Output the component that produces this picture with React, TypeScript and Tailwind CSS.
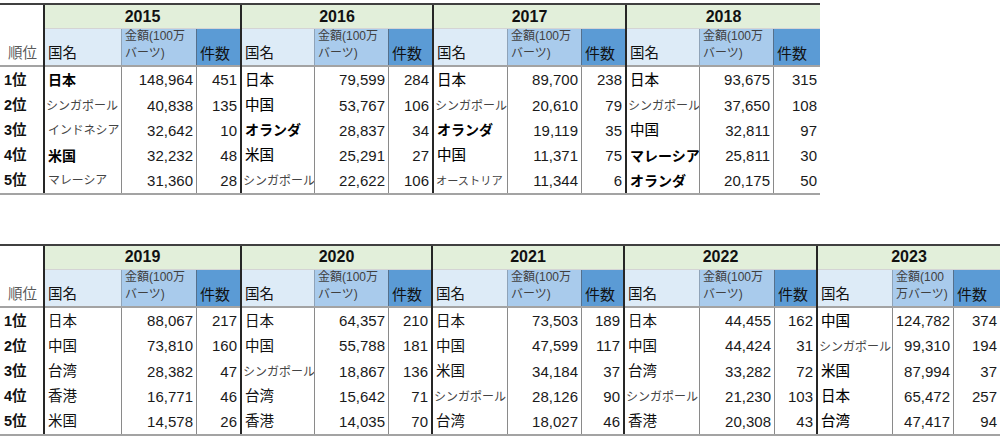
import * as React from "react";

type Row = [string, string, string, string];

interface Block {
  year: string;
  w: string;
  c1: string;
  c2: string;
  last?: boolean;
  head?: [string, string];
  rows: Row[];
}

// name styles: b = bold, m = medium, r = regular, s12/s11/s10 = shrunk katakana
const nameStyle: Record<string, string> = {
  b: "pl-[3px] font-bold text-[14px] text-black",
  m: "pl-[3px] text-[14.5px] text-black [-webkit-text-stroke:0.12px_#000]",
  r: "pl-[3px] text-[14.5px] text-[#111]",
  s12: "pl-[1px] text-[12px] text-[#444]",
  s11: "pl-[3px] text-[11.9px] text-[#444]",
  s10: "pl-[2px] text-[11.2px] text-[#444]",
};

const top: Block[] = [
  {
    year: "2015",
    w: "w-[197px]",
    c1: "w-[77px]",
    c2: "w-[75px]",
    rows: [
      ["日本", "148,964", "451", "b"],
      ["シンガポール", "40,838", "135", "s12"],
      ["インドネシア", "32,642", "10", "s11"],
      ["米国", "32,232", "48", "b"],
      ["マレーシア", "31,360", "28", "s11"],
    ],
  },
  {
    year: "2016",
    w: "w-[192px]",
    c1: "w-[73px]",
    c2: "w-[74px]",
    rows: [
      ["日本", "79,599", "284", "m"],
      ["中国", "53,767", "106", "m"],
      ["オランダ", "28,837", "34", "b"],
      ["米国", "25,291", "27", "m"],
      ["シンガポール", "22,622", "106", "s12"],
    ],
  },
  {
    year: "2017",
    w: "w-[193px]",
    c1: "w-[74px]",
    c2: "w-[74px]",
    rows: [
      ["日本", "89,700", "238", "m"],
      ["シンガポール", "20,610", "79", "s12"],
      ["オランダ", "19,119", "35", "b"],
      ["中国", "11,371", "75", "m"],
      ["オーストリア", "11,344", "6", "s10"],
    ],
  },
  {
    year: "2018",
    w: "w-[193px]",
    c1: "w-[73px]",
    c2: "w-[74px]",
    last: true,
    rows: [
      ["日本", "93,675", "315", "m"],
      ["シンガポール", "37,650", "108", "s12"],
      ["中国", "32,811", "97", "m"],
      ["マレーシア", "25,811", "30", "b"],
      ["オランダ", "20,175", "50", "b"],
    ],
  },
];

const bottom: Block[] = [
  {
    year: "2019",
    w: "w-[197px]",
    c1: "w-[77px]",
    c2: "w-[75px]",
    rows: [
      ["日本", "88,067", "217", "r"],
      ["中国", "73,810", "160", "r"],
      ["台湾", "28,382", "47", "r"],
      ["香港", "16,771", "46", "r"],
      ["米国", "14,578", "26", "r"],
    ],
  },
  {
    year: "2020",
    w: "w-[191px]",
    c1: "w-[73px]",
    c2: "w-[74px]",
    rows: [
      ["日本", "64,357", "210", "r"],
      ["中国", "55,788", "181", "r"],
      ["シンガポール", "18,867", "136", "s12"],
      ["台湾", "15,642", "71", "r"],
      ["香港", "14,035", "70", "r"],
    ],
  },
  {
    year: "2021",
    w: "w-[192px]",
    c1: "w-[75px]",
    c2: "w-[74px]",
    rows: [
      ["日本", "73,503", "189", "r"],
      ["中国", "47,599", "117", "r"],
      ["米国", "34,184", "37", "r"],
      ["シンガポール", "28,126", "90", "s12"],
      ["台湾", "18,027", "46", "r"],
    ],
  },
  {
    year: "2022",
    w: "w-[193px]",
    c1: "w-[75px]",
    c2: "w-[75px]",
    rows: [
      ["日本", "44,455", "162", "r"],
      ["中国", "44,424", "31", "r"],
      ["台湾", "33,282", "72", "r"],
      ["シンガポール", "21,230", "103", "s12"],
      ["香港", "20,308", "43", "r"],
    ],
  },
  {
    year: "2023",
    w: "w-[182px]",
    c1: "w-[75px]",
    c2: "w-[61px]",
    last: true,
    head: ["金額(100", "万バーツ)"],
    rows: [
      ["中国", "124,782", "374", "m"],
      ["シンガポール", "99,310", "194", "s12"],
      ["米国", "87,994", "37", "m"],
      ["日本", "65,472", "257", "m"],
      ["台湾", "47,417", "94", "m"],
    ],
  },
];

function RankColumn() {
  return (
    <div className="flex w-[45px] shrink-0 flex-col border-r-2 border-[#262626]">
      <div className="h-[24px]" />
      <div className="flex h-[38px] items-end justify-end border-b-2 border-[#a3a3a3] pb-[3px] pr-[6px] text-[14.5px] leading-[17px] text-[#5a5a5a]">
        順位
      </div>
      {[1, 2, 3, 4, 5].map((n) => (
        <div
          key={n}
          className="flex h-[25.2px] items-center pl-[4px] pt-[2px] text-[14.5px] font-bold text-[#111]"
        >
          {n}位
        </div>
      ))}
    </div>
  );
}

function YearBlock({ b }: { b: Block }) {
  const head = b.head ?? ["金額(100万", "バーツ)"];
  return (
    <div
      className={[
        "flex shrink-0 flex-col",
        b.w,
        b.last ? "" : "border-r-2 border-[#262626]",
      ].join(" ")}
    >
      {/* year */}
      <div className="flex h-[24px] items-center justify-center border-b border-[#d4d4d4] bg-[#e2efda] text-[16px] font-bold text-[#111]">
        {b.year}
      </div>

      {/* column headers */}
      <div className="flex h-[38px] border-b-2 border-[#a3a3a3]">
        <div
          className={[
            "flex shrink-0 items-end border-r border-[#8fa3b8] bg-[#ddebf7] pb-[3px] pl-[3px] text-[14.5px] leading-[17px] text-[#111]",
            b.c1,
          ].join(" ")}
        >
          国名
        </div>
        <div
          className={[
            "flex shrink-0 flex-col justify-end border-r border-[#55708c] bg-[#a9cbec] pb-[3px] pl-[3px] text-[12px] leading-[17px] text-[#404040]",
            b.c2,
          ].join(" ")}
        >
          <span className="whitespace-nowrap">{head[0]}</span>
          <span className="whitespace-nowrap">{head[1]}</span>
        </div>
        <div className="flex min-w-0 flex-1 items-end bg-[#5b9bd5] pb-[3px] pl-[3px] text-[15px] leading-[17px] text-[#111]">
          件数
        </div>
      </div>

      {/* data rows */}
      {b.rows.map(([name, amount, count, style], i) => (
        <div key={i} className="flex h-[25.2px]">
          <div
            className={[
              "flex shrink-0 items-center overflow-hidden whitespace-nowrap border-r border-[#8a8a8a] pt-[2px]",
              b.c1,
              nameStyle[style],
            ].join(" ")}
          >
            {name}
          </div>
          <div
            className={[
              "flex shrink-0 items-center justify-end border-r border-[#8a8a8a] pr-[3px] pt-[2px] text-[15px] text-[#1a1a1a]",
              b.c2,
            ].join(" ")}
          >
            {amount}
          </div>
          <div className="flex min-w-0 flex-1 items-center justify-end pr-[3px] pt-[2px] text-[15px] text-[#1a1a1a]">
            {count}
          </div>
        </div>
      ))}
    </div>
  );
}

function Table({ blocks, width }: { blocks: Block[]; width: string }) {
  return (
    <div className={["flex border-y-2 border-t-[#404040] border-b-[#a3a3a3]", width].join(" ")}>
      <RankColumn />
      {blocks.map((b) => (
        <YearBlock key={b.year} b={b} />
      ))}
    </div>
  );
}

export default function App() {
  return (
    <div className="h-[437px] w-[1000px] overflow-hidden bg-white pt-[3px] font-['Liberation_Sans','Noto_Sans_CJK_JP',sans-serif]">
      <Table blocks={top} width="w-[820px]" />
      <div className="h-[49px]" />
      <Table blocks={bottom} width="w-[1000px]" />
    </div>
  );
}
